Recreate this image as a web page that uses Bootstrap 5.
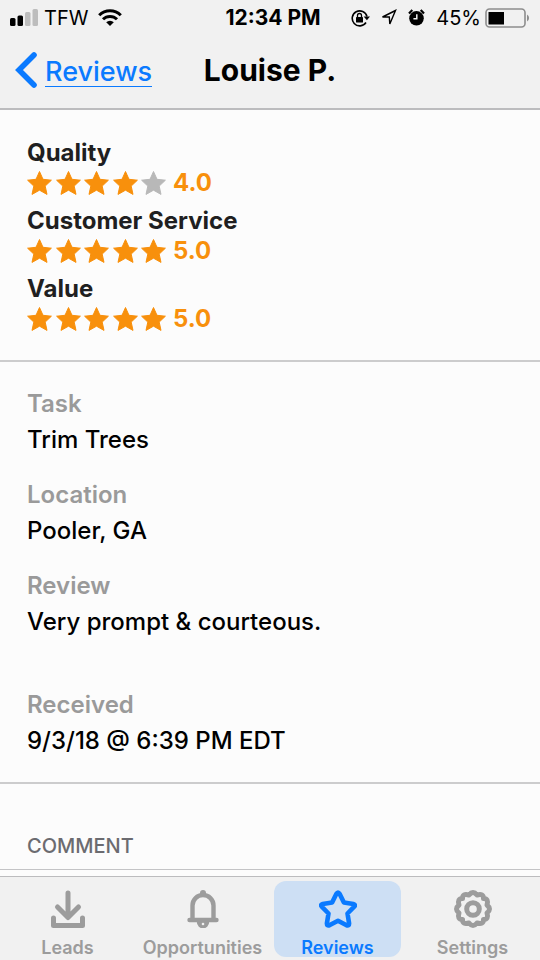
<!DOCTYPE html>
<html lang="en">
<head>
<meta charset="utf-8">
<meta name="viewport" content="width=device-width, initial-scale=1">
<title>Louise P. – Reviews</title>
<link href="https://cdn.jsdelivr.net/npm/bootstrap@5.3.0/dist/css/bootstrap.min.css" rel="stylesheet">
<style>
body { font-family: Inter, "Liberation Sans", sans-serif; background: #fcfcfc; color: #000; }
svg { display: block; flex: none; }
.bar-bg { background: #f1f1f1; }
.three-part { display: grid; grid-template-columns: 1fr auto 1fr; align-items: center; }
.status { height: 35px; padding: 0 10px; font-size: 20px; line-height: 24px; }
.status-time { font-size: 21px; font-weight: 700; padding-left: 6px; }
.status-left { gap: 6px; }
.status-right { gap: 11px; }
.titlebar { height: 73px; padding: 0 14px 3px; }
.top-bar { border-bottom: 2px solid #bcbcbe; }
.back { color: #0a7aff; font-size: 27px; font-weight: 500; line-height: 36px; gap: 7px; }
.back span { border-bottom: 1px solid #0a7aff; line-height: 29px; }
.page-title { font-size: 30px; line-height: 36px; font-weight: 700; }
.ratings { padding: 28px 27px 26px; border-bottom: 2px solid #cccccd; gap: 8px; }
.rating-name { font-size: 24px; line-height: 30px; font-weight: 700; color: #1f1f21; }
.rating-score { font-size: 24px; line-height: 30px; font-weight: 700; color: #f8900c; gap: 7px; }
.stars { width: 139px; fill: #f8900c; stroke: #f8900c; }
.stars .off { fill: #b8b8b8; stroke: #b8b8b8; }
.details { padding: 24px 27px 23px; border-bottom: 2px solid #cccccd; gap: 19px; font-size: 24px; line-height: 36px; }
.details dt { font-weight: 600; color: #9a9a9a; }
.details dd { font-weight: 500; }
.spaced { padding-bottom: 28px; }
.comment-head { padding: 47px 27px 8px; font-size: 20px; line-height: 30px; font-weight: 500; color: #6b6b70; border-bottom: 1px solid #c4c4c6; }
.tabs { border-top: 1px solid #bcbcbe; padding: 4px 0 3px; }
.tab { color: #9c9c9c; font-size: 18px; line-height: 24px; font-weight: 600; padding-top: 9px; margin: 0 4px; border-radius: 12px; gap: 8px; height: 76px; }
.tab.active { color: #0a7aff; background: #cddff4; }
</style>
</head>
<body>
<div class="d-flex flex-column min-vh-100">
<header class="bar-bg top-bar sticky-top">
  <div class="status three-part">
    <div class="status-left d-flex align-items-center">
      <svg width="28" height="17" viewBox="0 0 28 17" aria-hidden="true"><rect x="0" y="9" width="5.500" height="8" rx="1.500"/><rect x="7.500" y="6.500" width="5.500" height="10.500" rx="1.500"/><g fill="#bdbdbd"><rect x="15" y="3" width="5.500" height="14" rx="1.500"/><rect x="22.500" y="0" width="5.500" height="17" rx="1.500"/></g></svg>
      <span>TFW</span>
      <svg class="ms-1" width="24" height="17" viewBox="0 0 24 17" fill="none" stroke="#000" stroke-width="3" aria-hidden="true"><path d="M1.200 6.300a15.300 15.300 0 0 1 21.600 0M5 10.300a9.900 9.900 0 0 1 14 0"/><path d="M8.200 13.300a5.400 5.400 0 0 1 7.600 0L12 17z" fill="#000" stroke="none"/></svg>
    </div>
    <span class="status-time">12:34 PM</span>
    <div class="status-right d-flex align-items-center justify-content-end">
      <svg width="19" height="18" viewBox="0 0 19 18" aria-hidden="true"><path d="M15 13.500A7.500 7.500 0 1 1 16 7.500" fill="none" stroke="#000" stroke-width="1.600"/><path d="M12.600 7.600h6.400l-3.100 3.600z"/><rect x="5" y="8" width="7" height="5.500" rx=".6"/><path d="M6.500 8V6.500a2 2 0 0 1 4 0V8" fill="none" stroke="#000" stroke-width="1.300"/></svg>
      <svg width="16" height="17" viewBox="0 0 16 17" fill="none" stroke="#000" stroke-width="1.400" aria-hidden="true"><path d="M14.500 1.500 1.500 8h6.800l.5 7z" stroke-linejoin="miter"/></svg>
      <svg width="17" height="17" viewBox="0 0 17 17" aria-hidden="true"><circle cx="8.500" cy="9.300" r="7.300"/><path d="M1 4.500 4.300 1M12.700 1 16 4.500" stroke="#000" stroke-width="2.200"/><path d="M8.800 5.200v4.600H5.400" fill="none" stroke="#f1f1f1" stroke-width="1.500"/></svg>
      <span class="d-flex align-items-center"><span>45%</span>
      <svg class="ms-1" width="45" height="20" viewBox="0 0 45 20" aria-hidden="true"><rect x="1" y="1" width="39" height="18" rx="3.500" fill="none" stroke="#8d8d8d" stroke-width="1.600"/><rect x="3.500" y="4" width="15.500" height="12.500"/><path d="M42 6.500a4 4 0 0 1 0 7z" fill="#8d8d8d"/></svg></span>
    </div>
  </div>
  <nav class="titlebar three-part" aria-label="Back">
    <a href="#" class="back d-flex align-items-center text-decoration-none">
      <svg width="24" height="38" viewBox="0 0 24 38" fill="none" stroke="#0a7aff" stroke-width="5.600" stroke-linecap="round" stroke-linejoin="miter" aria-hidden="true"><path d="M20 4 5 19l15 15"/></svg>
      <span class="pt-1">Reviews</span>
    </a>
    <h1 class="page-title m-0">Louise P.</h1>
  </nav>
</header>

<svg width="0" height="0" class="position-absolute" aria-hidden="true"><symbol id="star" viewBox="0 0 25 24"><path stroke-width="1" stroke-linejoin="round" d="M12.500.5 16 8.300l8.400.9-6.200 5.900 1.800 8.300-7.500-4.200L5 23.400l1.800-8.300L.6 9.200 9 8.300z"/></symbol></svg>

<main class="flex-grow-1">
  <section class="ratings d-flex flex-column">
    <div><div class="rating-name">Quality</div>
      <div class="rating-score d-flex align-items-center"><div class="stars d-flex justify-content-between"><svg width="25" height="24"><use href="#star"/></svg><svg width="25" height="24"><use href="#star"/></svg><svg width="25" height="24"><use href="#star"/></svg><svg width="25" height="24"><use href="#star"/></svg><svg class="off" width="25" height="24"><use href="#star"/></svg></div><span>4.0</span></div></div>
    <div><div class="rating-name">Customer Service</div>
      <div class="rating-score d-flex align-items-center"><div class="stars d-flex justify-content-between"><svg width="25" height="24"><use href="#star"/></svg><svg width="25" height="24"><use href="#star"/></svg><svg width="25" height="24"><use href="#star"/></svg><svg width="25" height="24"><use href="#star"/></svg><svg width="25" height="24"><use href="#star"/></svg></div><span>5.0</span></div></div>
    <div><div class="rating-name">Value</div>
      <div class="rating-score d-flex align-items-center"><div class="stars d-flex justify-content-between"><svg width="25" height="24"><use href="#star"/></svg><svg width="25" height="24"><use href="#star"/></svg><svg width="25" height="24"><use href="#star"/></svg><svg width="25" height="24"><use href="#star"/></svg><svg width="25" height="24"><use href="#star"/></svg></div><span>5.0</span></div></div>
  </section>
  <dl class="details d-flex flex-column m-0">
    <div><dt>Task</dt><dd class="m-0">Trim Trees</dd></div>
    <div><dt>Location</dt><dd class="m-0">Pooler, GA</dd></div>
    <div class="spaced"><dt>Review</dt><dd class="m-0">Very prompt &amp; courteous.</dd></div>
    <div><dt>Received</dt><dd class="m-0">9/3/18 @ 6:39 PM EDT</dd></div>
  </dl>
  <h2 class="comment-head m-0">COMMENT</h2>
</main>

<footer class="bar-bg tabs sticky-bottom">
  <nav class="row g-0" aria-label="Main">
    <div class="col-3"><a href="#" class="tab d-flex flex-column align-items-center text-decoration-none">
      <svg width="36" height="38" viewBox="0 0 36 38" fill="none" stroke="currentColor" stroke-width="5" stroke-linecap="round" stroke-linejoin="round" aria-hidden="true"><path d="M18 3v24M7.500 17 18 27.500 28.500 17"/><path d="M3.500 28v7.500h29V28"/></svg>Leads</a></div>
    <div class="col-3"><a href="#" class="tab d-flex flex-column align-items-center text-decoration-none">
      <svg width="34" height="38" viewBox="0 0 34 38" fill="none" stroke="currentColor" stroke-width="4.400" stroke-linecap="round" aria-hidden="true"><path d="M6.500 30V15.500a10.500 10.500 0 0 1 21 0V30M3.500 30h27"/><circle cx="17" cy="3" r="3" fill="currentColor" stroke="none"/><path d="M10.700 31a6.300 7.500 0 0 0 12.600 0z" fill="currentColor" stroke="none"/><circle cx="17" cy="34" r="1.300" fill="#f1f1f1" stroke="none"/></svg>Opportunities</a></div>
    <div class="col-3"><a href="#" class="tab active d-flex flex-column align-items-center text-decoration-none" aria-current="page">
      <svg width="38" height="38" viewBox="0 0 38 38" fill="none" stroke="currentColor" stroke-width="4.600" stroke-linejoin="round" aria-hidden="true"><path d="M17.300 4q1.700-2.800 3.400 0l4.200 8.500 9.400 1.400q2.800.8.900 2.800L28.500 23.500l1.600 9.800q.1 3-2.500 2L19 30.800l-8.600 4.500q-2.600 1-2.500-2l1.600-9.800L2.800 16.700q-1.900-2 .9-2.800l9.400-1.400z"/></svg>Reviews</a></div>
    <div class="col-3"><a href="#" class="tab d-flex flex-column align-items-center text-decoration-none">
      <svg width="38" height="38" viewBox="-19 -19 38 38" fill="none" stroke="currentColor" stroke-width="5" stroke-linejoin="round" aria-hidden="true"><path d="M-4-14Q0-19 4-14 10.500-16 10.500-10.500 16-10.500 14-4 19 0 14 4 16 10.500 10.500 10.500 10.500 16 4 14 0 19-4 14-10.500 16-10.500 10.500-16 10.500-14 4-19 0-14-4-16-10.500-10.500-10.500-10.500-16-4-14z"/><circle r="6.300"/></svg>Settings</a></div>
  </nav>
</footer>
</div>
<script src="https://cdn.jsdelivr.net/npm/bootstrap@5.3.0/dist/js/bootstrap.bundle.min.js"></script>
</body>
</html>
